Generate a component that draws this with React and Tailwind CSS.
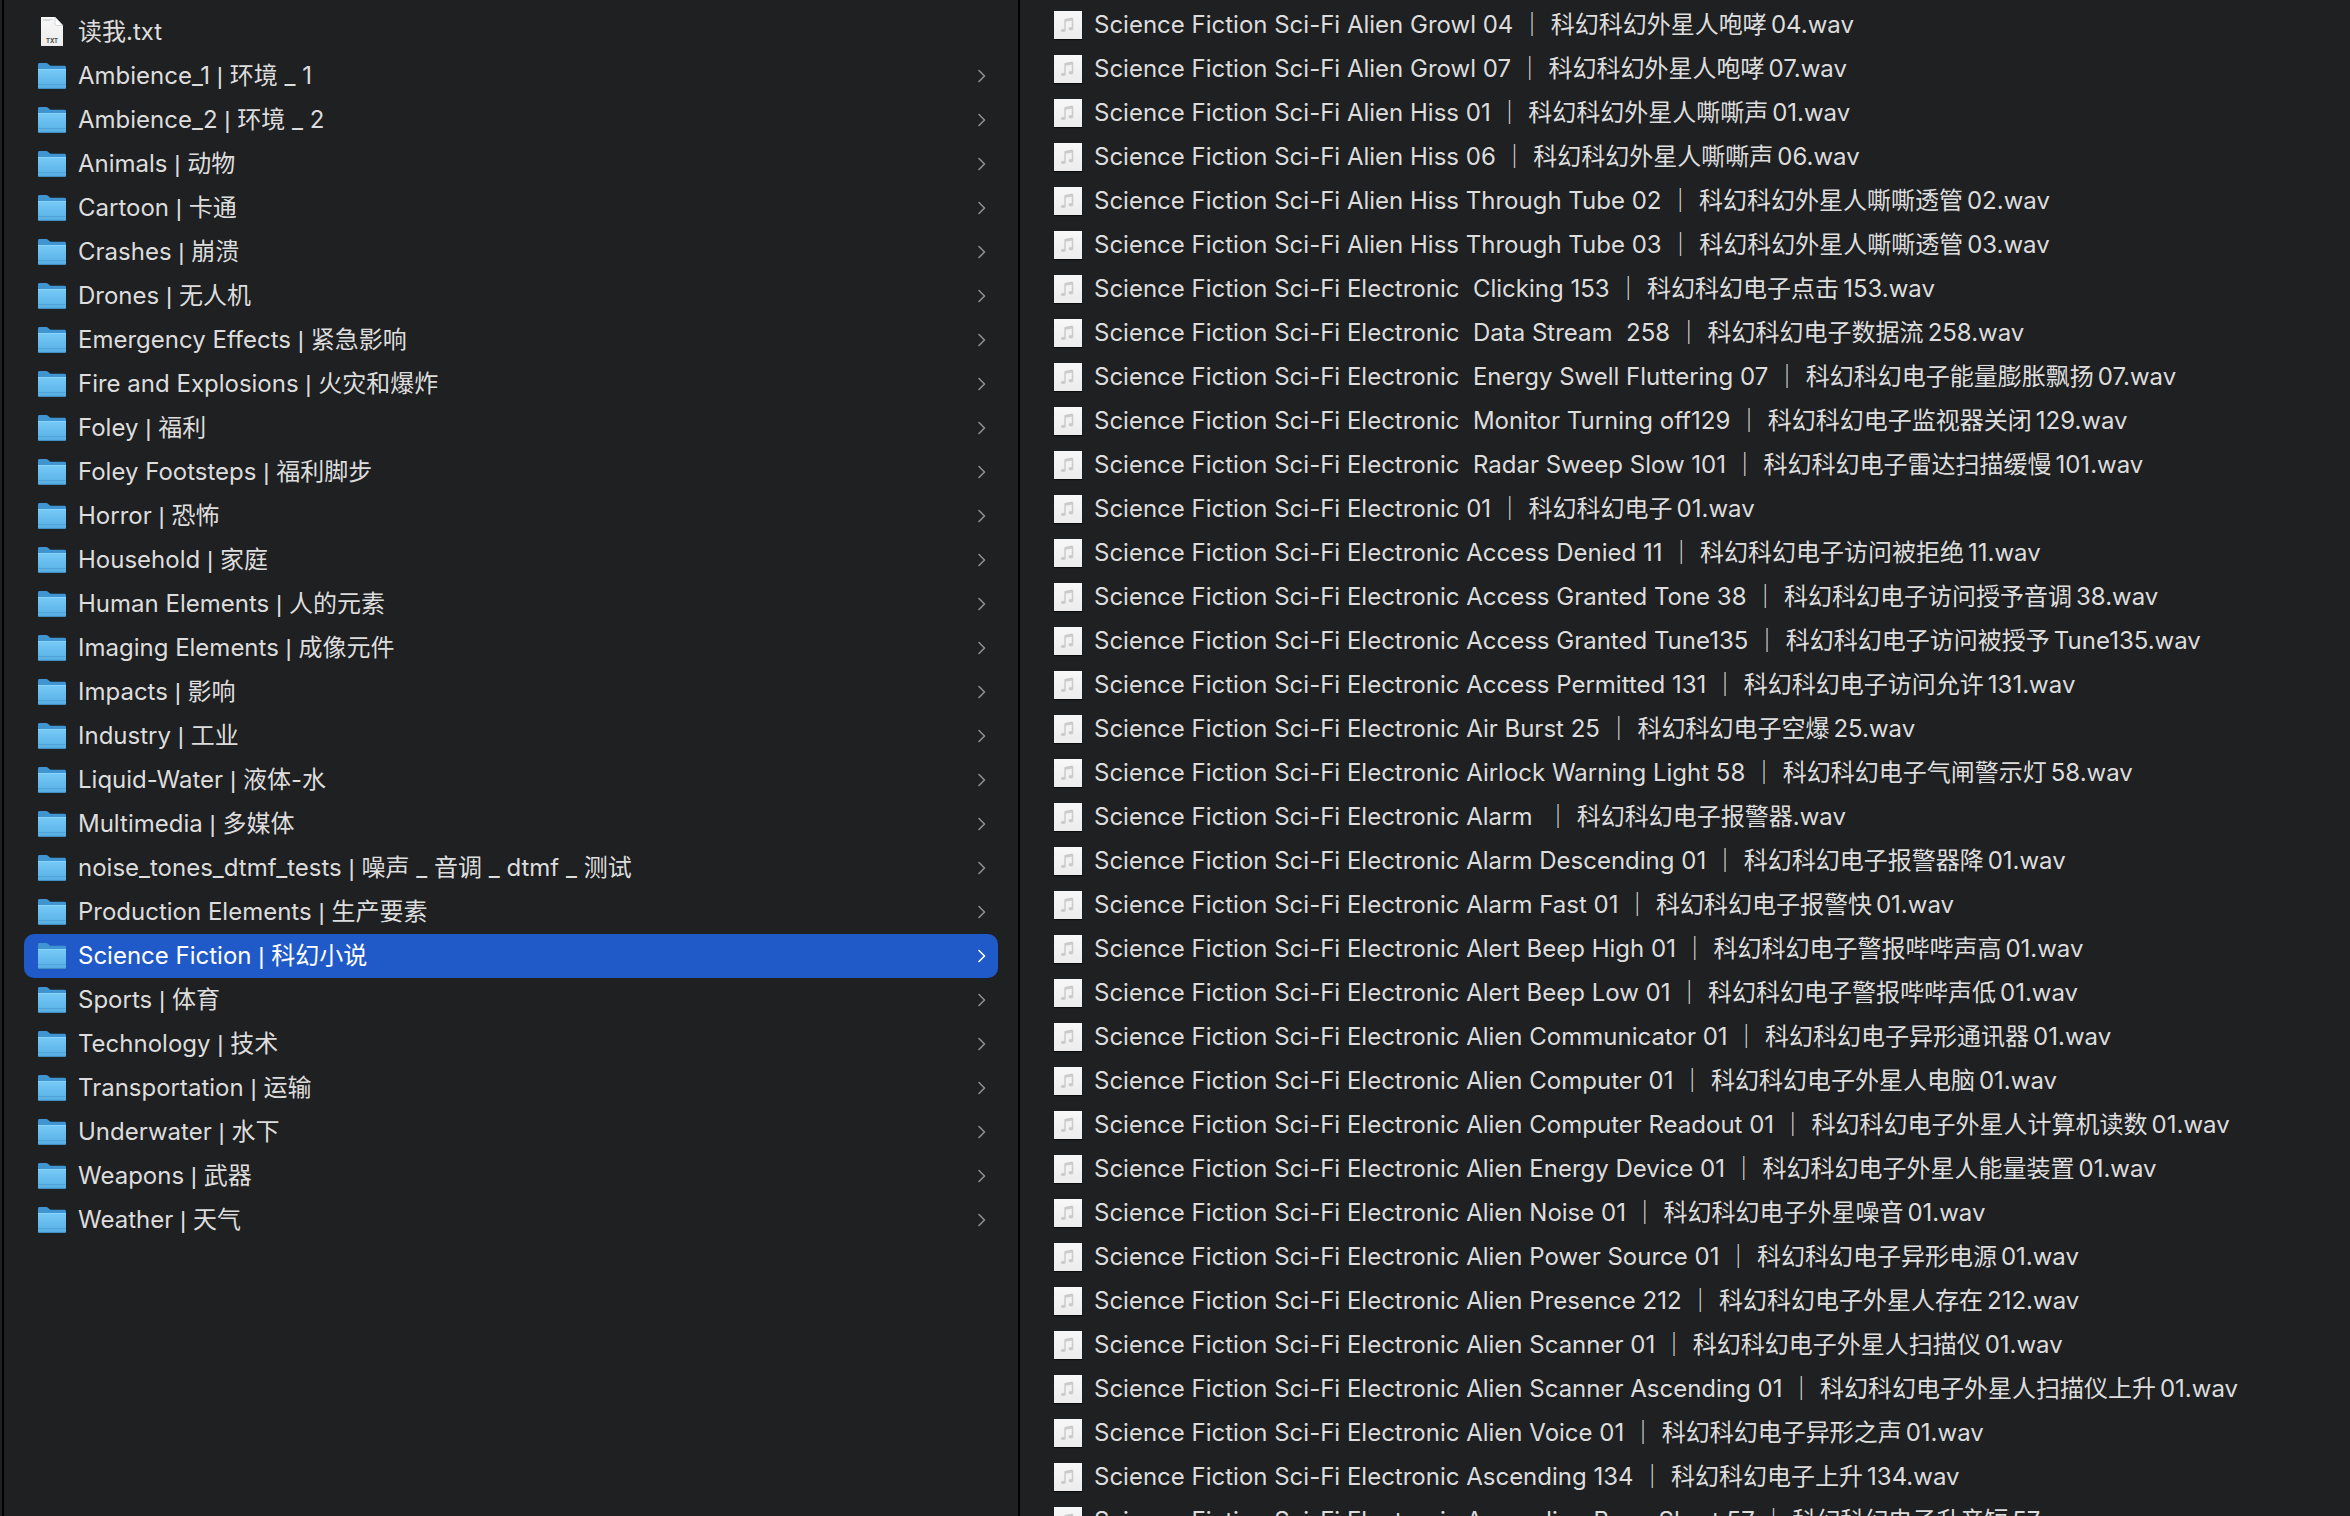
const FOLDERS = [
  ['Ambience_1', '环境 _ 1'],
  ['Ambience_2', '环境 _ 2'],
  ['Animals', '动物'],
  ['Cartoon', '卡通'],
  ['Crashes', '崩溃'],
  ['Drones', '无人机'],
  ['Emergency Effects', '紧急影响'],
  ['Fire and Explosions', '火灾和爆炸'],
  ['Foley', '福利'],
  ['Foley Footsteps', '福利脚步'],
  ['Horror', '恐怖'],
  ['Household', '家庭'],
  ['Human Elements', '人的元素'],
  ['Imaging Elements', '成像元件'],
  ['Impacts', '影响'],
  ['Industry', '工业'],
  ['Liquid-Water', '液体-水'],
  ['Multimedia', '多媒体'],
  ['noise_tones_dtmf_tests', '噪声 _ 音调 _ dtmf _ 测试'],
  ['Production Elements', '生产要素'],
  ['Science Fiction', '科幻小说'],
  ['Sports', '体育'],
  ['Technology', '技术'],
  ['Transportation', '运输'],
  ['Underwater', '水下'],
  ['Weapons', '武器'],
  ['Weather', '天气'],
];

const SELECTED = 'Science Fiction';

const FILES = [
  ['Alien Growl 04', '外星人咆哮', '04'],
  ['Alien Growl 07', '外星人咆哮', '07'],
  ['Alien Hiss 01', '外星人嘶嘶声', '01'],
  ['Alien Hiss 06', '外星人嘶嘶声', '06'],
  ['Alien Hiss Through Tube 02', '外星人嘶嘶透管', '02'],
  ['Alien Hiss Through Tube 03', '外星人嘶嘶透管', '03'],
  ['Electronic  Clicking 153', '电子点击', '153'],
  ['Electronic  Data Stream  258', '电子数据流', '258'],
  ['Electronic  Energy Swell Fluttering 07', '电子能量膨胀飘扬', '07'],
  ['Electronic  Monitor Turning off129', '电子监视器关闭', '129'],
  ['Electronic  Radar Sweep Slow 101', '电子雷达扫描缓慢', '101'],
  ['Electronic 01', '电子', '01'],
  ['Electronic Access Denied 11', '电子访问被拒绝', '11'],
  ['Electronic Access Granted Tone 38', '电子访问授予音调', '38'],
  ['Electronic Access Granted Tune135', '电子访问被授予', 'Tune135'],
  ['Electronic Access Permitted 131', '电子访问允许', '131'],
  ['Electronic Air Burst 25', '电子空爆', '25'],
  ['Electronic Airlock Warning Light 58', '电子气闸警示灯', '58'],
  ['Electronic Alarm ', '电子报警器', ''],
  ['Electronic Alarm Descending 01', '电子报警器降', '01'],
  ['Electronic Alarm Fast 01', '电子报警快', '01'],
  ['Electronic Alert Beep High 01', '电子警报哔哔声高', '01'],
  ['Electronic Alert Beep Low 01', '电子警报哔哔声低', '01'],
  ['Electronic Alien Communicator 01', '电子异形通讯器', '01'],
  ['Electronic Alien Computer 01', '电子外星人电脑', '01'],
  ['Electronic Alien Computer Readout 01', '电子外星人计算机读数', '01'],
  ['Electronic Alien Energy Device 01', '电子外星人能量装置', '01'],
  ['Electronic Alien Noise 01', '电子外星噪音', '01'],
  ['Electronic Alien Power Source 01', '电子异形电源', '01'],
  ['Electronic Alien Presence 212', '电子外星人存在', '212'],
  ['Electronic Alien Scanner 01', '电子外星人扫描仪', '01'],
  ['Electronic Alien Scanner Ascending 01', '电子外星人扫描仪上升', '01'],
  ['Electronic Alien Voice 01', '电子异形之声', '01'],
  ['Electronic Ascending 134', '电子上升', '134'],
  ['Electronic Ascending Beep Short 57', '电子升音短', '57'],
];

function FolderIcon() {
  return (
    <svg viewBox="0 0 28 28" className="size-7 shrink-0" aria-hidden="true">
      <path d="M0 2.2Q0 1 1.4 1H8.2Q9.2 1 10 1.7L11.7 3.2Q12.4 3.8 13.4 3.8H26.6Q28 3.8 28 5.2V12H0Z" fill="#3f94d2" />
      <path d="M0 7H28V25.4Q28 27 26.4 27H1.6Q0 27 0 25.4Z" fill="url(#folder-front)" />
      <path d="M0 7.5H28" stroke="#8ad4fb" strokeWidth="1" />
      <path d="M0 22.5H28" stroke="#4a9dd3" strokeWidth="1" opacity="0.7" />
      <path d="M.6 26.4H27.4" stroke="#3e8cc0" strokeWidth="1" />
    </svg>
  );
}

function TextFileIcon() {
  return (
    <svg viewBox="0 0 28 30" className="h-[30px] w-7 shrink-0" aria-hidden="true">
      <path d="M3 0H17L25 8.5V29H3Z" fill="url(#sheet)" />
      <path d="M5 2.5H15M5 3.5H12" stroke="#c4c4c4" strokeWidth="0.6" />
      <path d="M17 0L25 8.5H18.4Q17 8.5 17 7.1Z" fill="#fff" stroke="#bdbdbd" strokeWidth="0.6" />
      <text x="14" y="25.8" textAnchor="middle" fontSize="6" fontWeight="700" fontFamily="Inter, sans-serif" fill="#4a4a4a">TXT</text>
    </svg>
  );
}

function AudioIcon() {
  return (
    <svg viewBox="0 0 28 28" className="size-7 shrink-0 shadow-[0_1px_1px_#0009]" aria-hidden="true">
      <path d="M0 0H28V28H0Z" fill="url(#sheet)" />
      <path d="M11 19V9L18.5 7.6V17.4" fill="none" stroke="#cbcbcb" strokeWidth="1.5" />
      <path d="M11 9.4L18.5 8" stroke="#cbcbcb" strokeWidth="3" />
      <ellipse cx="9.3" cy="19.4" rx="2.4" ry="1.7" fill="#cbcbcb" />
      <ellipse cx="16.9" cy="17.8" rx="2.4" ry="1.7" fill="#cbcbcb" />
    </svg>
  );
}

function Chevron() {
  return (
    <svg viewBox="0 0 8 14" className="h-3.5 w-2 shrink-0" fill="none" stroke="currentColor" strokeWidth="1.6" strokeLinecap="round" strokeLinejoin="round" aria-hidden="true">
      <path d="M1 1.5L6.5 7L1 12.5" />
    </svg>
  );
}

function Gradients() {
  return (
    <svg className="absolute size-0" aria-hidden="true">
      <defs>
        <linearGradient id="folder-front" x1="0" y1="0" x2="0" y2="1">
          <stop offset="0" stopColor="#76caf9" />
          <stop offset="1" stopColor="#56aee3" />
        </linearGradient>
        <linearGradient id="sheet" x1="0" y1="0" x2="0" y2="1">
          <stop offset="0" stopColor="#f8f8f8" />
          <stop offset="1" stopColor="#ececec" />
        </linearGradient>
      </defs>
    </svg>
  );
}

export default function App() {
  return (
    <main className="grid h-screen grid-cols-[1018fr_1330fr] overflow-hidden bg-[#1f2022] pl-0.5 font-['Inter','Noto_Sans_CJK_SC',sans-serif] text-2xl text-[#dddddd]">
      <Gradients />
      <ul className="min-w-0 border-x-2 border-black px-5 pt-2.5" aria-label="Folders">
        <li>
          <button type="button" className="flex h-11 w-full items-center gap-3 pr-3 pl-3.5 text-left">
            <TextFileIcon />
            <span className="grow truncate">读我.txt</span>
          </button>
        </li>
        {FOLDERS.map(([name, chinese]) => (
          <li key={name}>
            <button
              type="button"
              className={
                name === SELECTED
                  ? 'flex h-11 w-full items-center gap-3 rounded-[10px] bg-[#2059c8] pr-3 pl-3.5 text-left text-white'
                  : 'flex h-11 w-full items-center gap-3 pr-3 pl-3.5 text-left'
              }
            >
              <FolderIcon />
              <span className="grow truncate">
                {name} <span className="font-['Liberation_Sans',sans-serif]">|</span> {chinese}
              </span>
              <span className={name === SELECTED ? 'text-white' : 'text-[#8d8e8f]'}>
                <Chevron />
              </span>
            </button>
          </li>
        ))}
      </ul>
      <ul className="min-w-0 pt-[3px] pl-5" aria-label="Science Fiction">
        {FILES.map(([title, chinese, suffix]) => (
          <li key={title}>
            <button type="button" className="flex h-11 w-full items-center gap-3 pl-3.5 text-left">
              <AudioIcon />
              <span className="whitespace-pre">
                {`Science Fiction Sci-Fi ${title} ｜ 科幻科幻${chinese}`}
                <span className={suffix ? 'ml-1' : ''}>{`${suffix}.wav`}</span>
              </span>
            </button>
          </li>
        ))}
      </ul>
    </main>
  );
}
